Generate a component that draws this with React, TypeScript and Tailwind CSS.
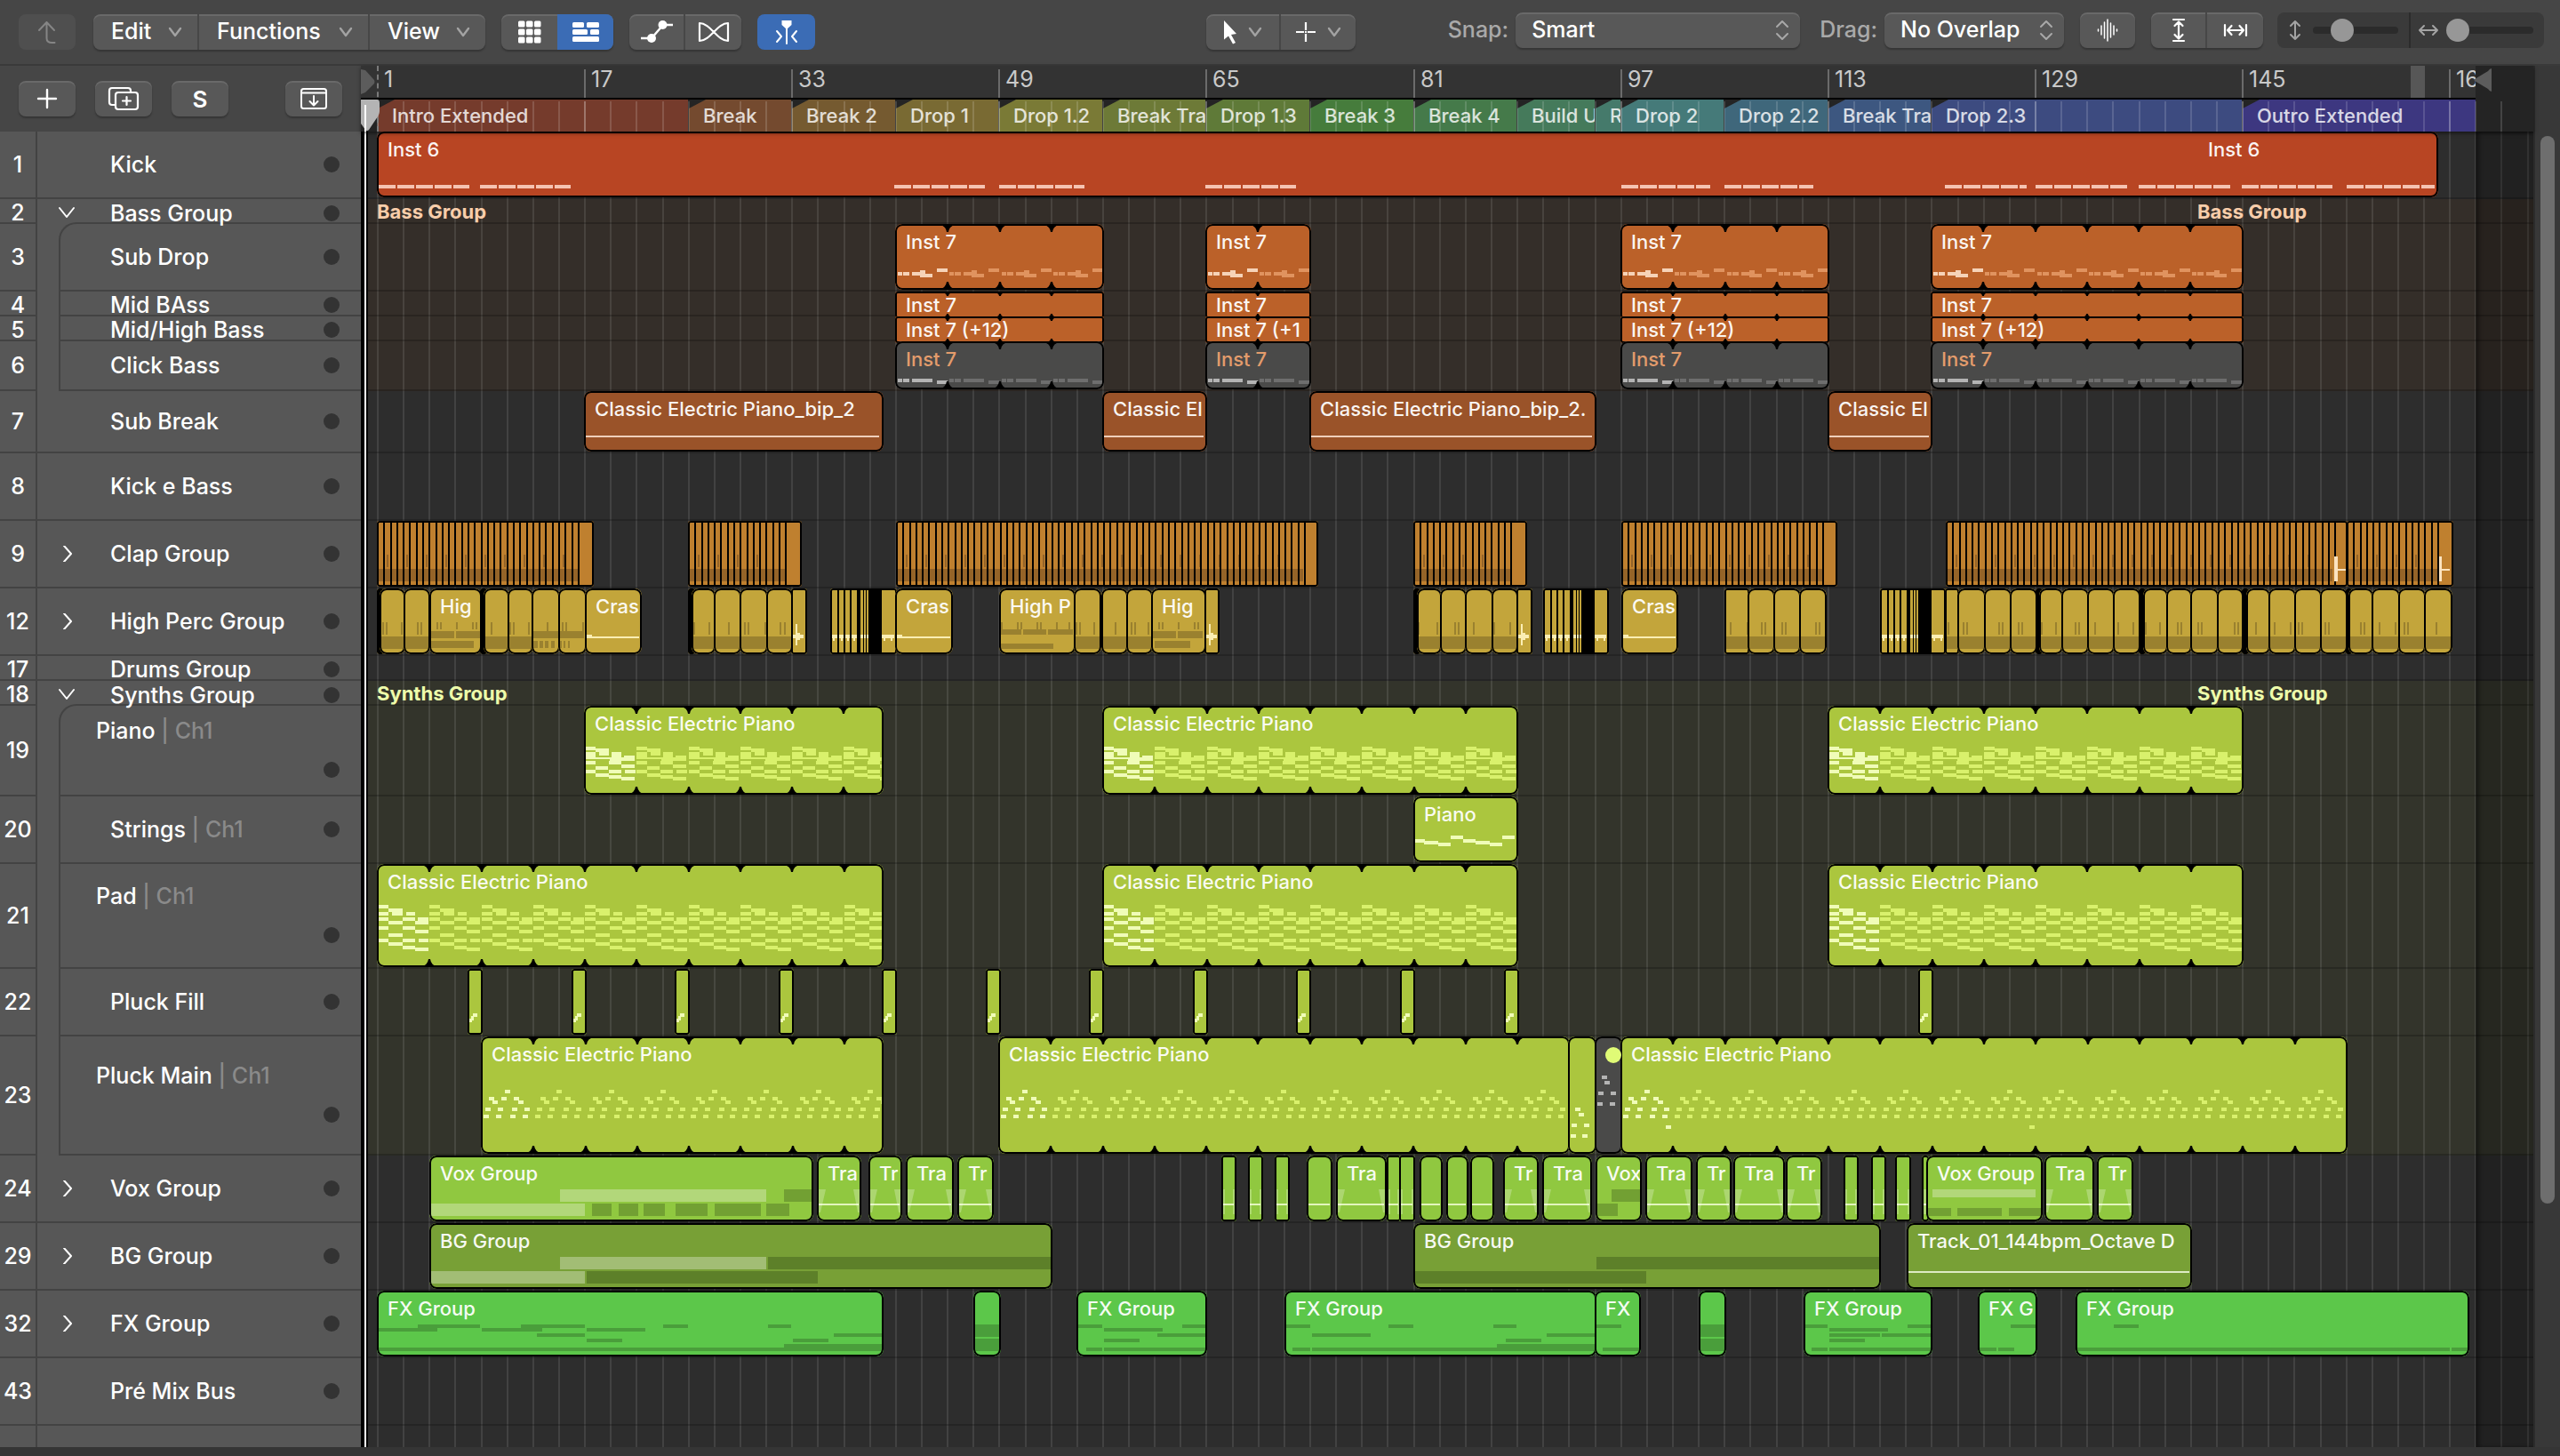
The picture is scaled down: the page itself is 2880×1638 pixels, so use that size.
import React, { useState } from 'react';

// ---------------------------------------------------------------------------
// Timeline geometry
// ---------------------------------------------------------------------------

const HEADER_W = 406;
const BAR_ONE = 424;
const BAR_W = 14.57;
const SONG_END = 2785;
const LABEL_TILE = 2048;

// neighbouring regions share their outline
const OVERLAP = 2;

const barX = (bar: number) => Math.round(BAR_ONE + (bar - 1) * BAR_W);
const barEnd = (bar: number) => barX(bar) + OVERLAP;
const toLane = (x: number) => x - HEADER_W;

type Block = [x: number, y: number, w: number, h: number, tone?: 'light' | 'dark' | 'dim'];

interface RegionData {
  x: number;
  end: number;
  label?: string;
  loop?: boolean;
  muted?: boolean;
  square?: boolean;
  wave?: boolean;
  slices?: boolean;
  burst?: boolean;
  hits?: number[];
  pattern?: Block[];
  blocks?: Block[];
}

interface Track {
  num: string;
  name: string;
  channel?: string;
  height: string;
  tall?: boolean;
  chevron?: 'open' | 'closed';
  tint?: string;
  banner?: string;
  color: string;
  compact?: boolean;
  light: string;
  dim: string;
  dark: string;
  regions: RegionData[];
}

// ---------------------------------------------------------------------------
// Note patterns, one loop (4 bars) each
// ---------------------------------------------------------------------------

const BASS: Block[] = [
  [2, 54, 5, 4], [8, 54, 7, 4], [18, 54, 10, 4], [27, 52, 6, 8], [32, 56, 9, 4], [46, 50, 12, 4],
];

const CLICK: Block[] = [
  [2, 42, 5, 4], [8, 42, 7, 4], [18, 42, 23, 4], [46, 44, 12, 4],
];

const PIANO: Block[] = [
  [0, 46, 12, 4], [12, 48, 14, 4], [16, 48, 11, 8], [0, 52, 12, 8], [30, 52, 11, 8],
  [12, 58, 16, 2], [28, 58, 18, 4], [44, 56, 12, 6], [0, 62, 12, 4], [27, 62, 14, 4], [41, 66, 15, 4],
  [12, 68, 14, 4], [0, 72, 12, 4], [27, 72, 14, 4], [45, 72, 12, 4], [12, 76, 15, 4],
  [27, 78, 14, 4], [41, 80, 15, 4],
];

const PAD: Block[] = [
  [0, 46, 12, 4], [12, 50, 16, 4], [16, 50, 12, 8], [0, 54, 12, 4], [32, 54, 10, 4], [0, 60, 12, 4],
  [28, 60, 14, 4], [45, 60, 12, 8], [12, 64, 16, 4], [42, 64, 14, 4], [0, 70, 12, 4],
  [28, 70, 14, 4], [42, 74, 15, 4], [12, 78, 16, 4], [0, 84, 12, 4], [28, 84, 14, 4],
  [46, 84, 11, 4], [12, 88, 16, 4], [28, 92, 14, 4], [42, 94, 15, 4],
];

const PLUCK: Block[] = [
  [26, 60, 6, 4], [8, 68, 6, 4], [22, 68, 6, 4], [36, 68, 6, 4], [12, 72, 6, 4], [41, 72, 6, 4],
  [4, 80, 6, 4], [18, 80, 6, 4], [34, 80, 6, 4], [48, 80, 6, 4],
  [2, 88, 6, 4], [16, 88, 6, 4], [32, 88, 6, 4], [46, 88, 6, 4],
];

const STRINGS: Block[] = [
  [1, 48, 12, 4], [12, 50, 16, 4], [28, 52, 14, 4], [42, 44, 14, 4],
  [56, 48, 14, 4], [70, 50, 16, 4], [86, 52, 14, 4], [100, 44, 14, 4],
];

const FILL: Block[] = [[2, 56, 3, 4], [4, 53, 3, 5], [6, 50, 5, 4]];

const kickRuns: [number, number][] = [
  [426, 528], [540, 642], [1006, 1108], [1124, 1220], [1356, 1458], [1824, 1924],
  [1940, 2040], [2188, 2280], [2290, 2394], [2406, 2510], [2522, 2624], [2640, 2739],
];

const kickNotes: Block[] = kickRuns.flatMap(([from, to]) => {
  const out: Block[] = [];
  for (let x = from; x < to; x += 21) {
    out.push([x - BAR_ONE, 60, Math.min(19, to - x), 4]);
  }
  return out;
});

const perc = (x: number, end: number, hits: number[] = [], square = false): RegionData => ({
  x,
  end: end + OVERLAP,
  square,
  hits,
  blocks: [[0, 54, end - x, 14, 'dark']],
});

const tra = (x: number, end: number, label?: string): RegionData => ({
  x,
  end,
  label,
  wave: true,
  square: end - x < 20,
});

const slices = (x: number, end: number): RegionData => ({ x, end, slices: true, square: true });

const loops = (from: number, to: number, label: string, pattern?: Block[], muted = false): RegionData => ({
  x: barX(from),
  end: barEnd(to),
  label,
  loop: true,
  pattern,
  muted,
});

const crash = (x: number, end: number): RegionData => ({
  x,
  end,
  label: 'Cras',
  blocks: [[1, 52, 7, 4, 'light'], [8, 54, end - x - 11, 2, 'light']],
});

const hit = (x: number, end: number): RegionData => ({
  x,
  end,
  square: true,
  blocks: [[1, 52, 13, 4, 'light'], [5, 40, 2, 24, 'light'], [7, 50, 3, 8, 'light']],
});

const ORANGE = { color: 'bg-[#bb6129]', light: '#f6d3b8', dim: '#e0935f', dark: '#8f4a1f' };
const BROWN = { color: 'bg-[#9a5329]', light: '#f0cfba', dim: '#e0935f', dark: '#7a4020' };
const LIME = { color: 'bg-[#abc63e]', light: '#f0fcb8', dim: '#d9f16c', dark: '#7f9a2c' };
const GREY_TRACK = { color: 'bg-[#575757]', light: '#fff', dim: '#ccc', dark: '#333' };

const PIANO_NAME = 'Classic Electric Piano';

const tracks: Track[] = [
  {
    num: '1',
    name: 'Kick',
    height: 'h-[76px]',
    color: 'bg-[#b84523]',
    light: '#f5c3b2',
    dim: '#f5c3b2',
    dark: '#8c3218',
    regions: [{ x: barX(1), end: barEnd(160), label: 'Inst 6', blocks: kickNotes }],
  },
  {
    num: '2',
    name: 'Bass Group',
    height: 'h-[28px]',
    chevron: 'open',
    tint: 'bg-[#342e29]',
    banner: 'text-[#f8cdaa]',
    ...GREY_TRACK,
    regions: [],
  },
  {
    num: '3',
    name: 'Sub Drop',
    height: 'h-[76px]',
    tint: 'bg-[#342e29]',
    ...ORANGE,
    regions: [
      loops(41, 57, 'Inst 7', BASS),
      loops(65, 73, 'Inst 7', BASS),
      loops(97, 113, 'Inst 7', BASS),
      loops(121, 145, 'Inst 7', BASS),
    ],
  },
  {
    num: '4',
    name: 'Mid BAss',
    height: 'h-[28px]',
    compact: true,
    tint: 'bg-[#342e29]',
    ...ORANGE,
    regions: [
      loops(41, 57, 'Inst 7'),
      loops(65, 73, 'Inst 7'),
      loops(97, 113, 'Inst 7'),
      loops(121, 145, 'Inst 7'),
    ],
  },
  {
    num: '5',
    name: 'Mid/High Bass',
    height: 'h-[28px]',
    compact: true,
    tint: 'bg-[#342e29]',
    ...ORANGE,
    regions: [
      loops(41, 57, 'Inst 7 (+12)'),
      loops(65, 73, 'Inst 7 (+1'),
      loops(97, 113, 'Inst 7 (+12)'),
      loops(121, 145, 'Inst 7 (+12)'),
    ],
  },
  {
    num: '6',
    name: 'Click Bass',
    height: 'h-[56px]',
    tint: 'bg-[#342e29]',
    ...ORANGE,
    regions: [
      loops(41, 57, 'Inst 7', CLICK, true),
      loops(65, 73, 'Inst 7', CLICK, true),
      loops(97, 113, 'Inst 7', CLICK, true),
      loops(121, 145, 'Inst 7', CLICK, true),
    ],
  },
  {
    num: '7',
    name: 'Sub Break',
    height: 'h-[70px]',
    ...BROWN,
    regions: [
      { x: barX(17), end: barEnd(40), label: 'Classic Electric Piano_bip_2', blocks: [[1, 50, 331, 2]] },
      { x: barX(57), end: barEnd(65), label: 'Classic El', blocks: [[1, 50, 113, 2]] },
      { x: barX(73), end: barEnd(95), label: 'Classic Electric Piano_bip_2.', blocks: [[1, 50, 317, 2]] },
      { x: barX(113), end: barEnd(121), label: 'Classic El', blocks: [[1, 50, 113, 2]] },
    ],
  },
  { num: '8', name: 'Kick e Bass', height: 'h-[76px]', ...BROWN, regions: [] },
  {
    num: '9',
    name: 'Clap Group',
    height: 'h-[76px]',
    chevron: 'closed',
    color: 'bg-[#bf802f]',
    light: '#fbe3c0',
    dim: '#fbe3c0',
    dark: '#956428',
    regions: [
      slices(424, 668),
      slices(774, 902),
      slices(1008, 1483),
      slices(1590, 1718),
      slices(1824, 2067),
      {
        ...slices(2189, 2641),
        blocks: [[437, 40, 4, 28, 'light'], [441, 54, 9, 2, 'light']],
      },
      {
        ...slices(2640, 2760),
        blocks: [[104, 40, 3, 28, 'light'], [107, 54, 9, 2, 'light']],
      },
    ],
  },
  {
    num: '12',
    name: 'High Perc Group',
    height: 'h-[76px]',
    chevron: 'closed',
    color: 'bg-[#c3a53b]',
    light: '#fbeeb4',
    dim: '#fbeeb4',
    dark: '#9a812f',
    regions: [
      { x: 424, end: 432, burst: true },
      perc(427, 454, [3, 7, 24]),
      perc(454, 482, [15, 19]),
      {
        x: 483,
        end: 542,
        label: 'Hig',
        hits: [8, 12, 30, 48, 52],
        blocks: [[0, 48, 28, 8, 'dark'], [30, 48, 28, 8, 'dark'], [0, 59, 50, 8, 'dark']],
      },
      { x: 540, end: 548, burst: true },
      perc(544, 571, [8]),
      perc(571, 598, [2, 6, 23]),
      {
        x: 598,
        end: 630,
        hits: [17],
        blocks: [[0, 48, 30, 8, 'dark'], [1, 59, 6, 8, 'dark'], [9, 59, 4, 8, 'dark'], [15, 59, 4, 8, 'dark'], [22, 59, 4, 8, 'dark']],
      },
      {
        x: 628,
        end: 660,
        hits: [4, 8, 27],
        blocks: [[0, 48, 29, 8, 'dark'], [1, 59, 3, 8, 'dark'], [6, 59, 2, 8, 'dark'], [11, 59, 2, 8, 'dark']],
      },
      crash(658, 722),
      { x: 774, end: 782, burst: true },
      perc(778, 803, [2, 19]),
      perc(803, 832, [16]),
      perc(832, 862, [5, 9, 28]),
      perc(862, 890, [15, 20]),
      hit(890, 908),
      { x: 934, end: 1009, burst: true, square: true },
      crash(1007, 1072),
      {
        x: 1124,
        end: 1210,
        label: 'High P',
        hits: [2, 20, 24, 42, 46, 64, 78],
        blocks: [[0, 46, 25, 6, 'dark'], [27, 46, 26, 6, 'dark'], [55, 46, 28, 6, 'dark'], [0, 62, 61, 6, 'dark']],
      },
      perc(1208, 1237, [2, 6, 22]),
      perc(1239, 1267, [15]),
      perc(1267, 1295, [5, 9, 24]),
      {
        x: 1295,
        end: 1357,
        label: 'Hig',
        hits: [8, 12, 30, 48, 52],
        blocks: [[0, 48, 28, 8, 'dark'], [30, 48, 28, 8, 'dark'], [4, 59, 40, 8, 'dark']],
      },
      hit(1355, 1372),
      { x: 1590, end: 1598, burst: true },
      perc(1594, 1620, [1, 22, 26]),
      perc(1620, 1648, [16, 20]),
      perc(1648, 1678, [9]),
      perc(1678, 1706, [2, 20]),
      hit(1706, 1724),
      { x: 1736, end: 1810, burst: true, square: true },
      crash(1824, 1888),
      perc(1940, 1966, [6, 25], true),
      perc(1966, 1995, [15, 19]),
      perc(1995, 2024, [9, 13]),
      perc(2024, 2053, [18, 22]),
      { x: 2115, end: 2189, burst: true, square: true },
      perc(2188, 2202, [3], true),
      perc(2202, 2232, [6, 10]),
      perc(2232, 2261, [16, 20]),
      perc(2261, 2290, [9, 13]),
      { x: 2290, end: 2298, burst: true },
      perc(2294, 2319, [2, 18]),
      perc(2319, 2348, [15, 19]),
      perc(2348, 2377, [8]),
      perc(2377, 2406, [5, 22]),
      { x: 2406, end: 2414, burst: true },
      perc(2411, 2437, [2, 18]),
      perc(2437, 2464, [12, 16]),
      perc(2464, 2494, [8, 12]),
      perc(2494, 2522, [19, 23]),
      { x: 2522, end: 2530, burst: true },
      perc(2527, 2552, [10]),
      perc(2552, 2581, [6, 24]),
      perc(2581, 2610, [4, 8]),
      perc(2610, 2639, [5, 9]),
      { x: 2639, end: 2646, burst: true },
      perc(2642, 2668, [13, 17]),
      perc(2668, 2698, [8, 26]),
      perc(2698, 2727, [6, 10]),
      perc(2727, 2757, [13]),
    ],
  },
  { num: '17', name: 'Drums Group', height: 'h-[28px]', ...GREY_TRACK, regions: [] },
  {
    num: '18',
    name: 'Synths Group',
    height: 'h-[28px]',
    chevron: 'open',
    tint: 'bg-[#33342b]',
    banner: 'text-[#eefcaa]',
    ...GREY_TRACK,
    regions: [],
  },
  {
    num: '19',
    name: 'Piano',
    channel: 'Ch1',
    height: 'h-[102px]',
    tall: true,
    tint: 'bg-[#33342b]',
    ...LIME,
    regions: [
      loops(17, 40, PIANO_NAME, PIANO),
      loops(57, 89, PIANO_NAME, PIANO),
      loops(113, 145, PIANO_NAME, PIANO),
    ],
  },
  {
    num: '20',
    name: 'Strings',
    channel: 'Ch1',
    height: 'h-[76px]',
    tint: 'bg-[#33342b]',
    ...LIME,
    regions: [{ x: barX(81), end: barEnd(89), label: 'Piano', blocks: STRINGS }],
  },
  {
    num: '21',
    name: 'Pad',
    channel: 'Ch1',
    height: 'h-[118px]',
    tall: true,
    tint: 'bg-[#33342b]',
    ...LIME,
    regions: [
      loops(1, 40, PIANO_NAME, PAD),
      loops(57, 89, PIANO_NAME, PAD),
      loops(113, 145, PIANO_NAME, PAD),
    ],
  },
  {
    num: '22',
    name: 'Pluck Fill',
    height: 'h-[76px]',
    tint: 'bg-[#33342b]',
    ...LIME,
    regions: [8, 16, 24, 32, 40, 48, 56, 64, 72, 80, 88, 120].map((bar) => ({
      x: barX(bar),
      end: barX(bar) + 17,
      square: true,
      blocks: FILL,
    })),
  },
  {
    num: '23',
    name: 'Pluck Main',
    channel: 'Ch1',
    height: 'h-[134px]',
    tall: true,
    tint: 'bg-[#33342b]',
    ...LIME,
    regions: [
      loops(9, 40, PIANO_NAME, PLUCK),
      loops(49, 93, PIANO_NAME, PLUCK),
      {
        x: barX(93),
        end: barEnd(95),
        blocks: [[8, 80, 6, 4], [12, 86, 6, 4], [4, 98, 6, 4], [18, 98, 6, 4], [3, 110, 6, 4], [16, 110, 6, 4]],
      },
      {
        x: barX(95),
        end: barEnd(97),
        muted: true,
        blocks: [[8, 44, 6, 4], [11, 50, 6, 4], [4, 62, 6, 4], [18, 62, 6, 4], [3, 74, 6, 4], [17, 74, 6, 4]],
      },
      {
        ...loops(97, 153, PIANO_NAME, PLUCK),
        blocks: [[51, 100, 6, 4], [460, 100, 6, 4, 'dim']],
      },
    ],
  },
  {
    num: '24',
    name: 'Vox Group',
    height: 'h-[76px]',
    chevron: 'closed',
    color: 'bg-[#90c840]',
    light: '#b2d77a',
    dim: '#e2f5bd',
    dark: '#72a033',
    regions: [
      {
        x: 483,
        end: 915,
        label: 'Vox Group',
        blocks: [
          [147, 38, 232, 14], [399, 38, 33, 14, 'dark'], [0, 54, 175, 14], [183, 54, 22, 14, 'dark'],
          [213, 54, 22, 14, 'dark'], [241, 54, 24, 14, 'dark'], [277, 54, 36, 14, 'dark'],
          [321, 54, 52, 14, 'dark'], [379, 54, 26, 14, 'dark'],
        ],
      },
      tra(919, 969, 'Tra'),
      tra(977, 1015, 'Tr'),
      tra(1019, 1073, 'Tra'),
      tra(1077, 1118, 'Tr'),
      tra(1374, 1391),
      tra(1404, 1421),
      tra(1434, 1451),
      tra(1470, 1499),
      tra(1503, 1560, 'Tra'),
      tra(1560, 1576),
      tra(1574, 1592),
      tra(1597, 1623),
      tra(1627, 1652),
      tra(1654, 1681),
      tra(1691, 1731, 'Tr'),
      tra(1735, 1791, 'Tra'),
      {
        x: 1795,
        end: 1847,
        label: 'Vox',
        blocks: [[18, 38, 34, 14, 'dark'], [0, 54, 25, 14, 'dark']],
      },
      tra(1851, 1904, 'Tra'),
      tra(1908, 1948, 'Tr'),
      tra(1950, 2008, 'Tra'),
      tra(2009, 2050, 'Tr'),
      tra(2074, 2091),
      tra(2105, 2122),
      tra(2132, 2150),
      tra(2162, 2170),
      {
        x: 2167,
        end: 2298,
        label: 'Vox Group',
        blocks: [
          [7, 38, 116, 9], [0, 59, 28, 9, 'dark'], [35, 59, 50, 9, 'dark'], [93, 59, 38, 9, 'dark'],
        ],
      },
      tra(2300, 2356, 'Tra'),
      tra(2359, 2400, 'Tr'),
    ],
  },
  {
    num: '29',
    name: 'BG Group',
    height: 'h-[76px]',
    chevron: 'closed',
    color: 'bg-[#78a036]',
    light: '#a2bd75',
    dim: '#deebc4',
    dark: '#5d8029',
    regions: [
      {
        x: 483,
        end: 1184,
        label: 'BG Group',
        blocks: [
          [147, 38, 232, 14], [381, 38, 320, 14, 'dark'], [0, 54, 175, 14], [177, 54, 260, 14, 'dark'],
        ],
      },
      {
        x: 1590,
        end: 2116,
        label: 'BG Group',
        blocks: [[206, 38, 320, 14, 'dark'], [0, 54, 262, 14, 'dark']],
      },
      { x: 2145, end: 2466, label: 'Track_01_144bpm_Octave D', blocks: [[1, 54, 317, 2, 'dim']] },
    ],
  },
  {
    num: '32',
    name: 'FX Group',
    height: 'h-[76px]',
    chevron: 'closed',
    color: 'bg-[#5cc74a]',
    light: '#4a9e3b',
    dim: '#4a9e3b',
    dark: '#4a9e3b',
    regions: [
      {
        x: 424,
        end: 994,
        label: 'FX Group',
        blocks: [
          [46, 38, 70, 4], [162, 38, 72, 4], [322, 38, 28, 4], [440, 38, 26, 4], [0, 42, 68, 4],
          [118, 42, 68, 4], [236, 42, 66, 4], [180, 48, 54, 4], [514, 48, 56, 4], [236, 54, 40, 4],
          [468, 54, 40, 4], [458, 60, 112, 4], [0, 64, 570, 4],
        ],
      },
      { x: 1095, end: 1126, blocks: [[0, 38, 31, 14], [0, 54, 31, 14]] },
      {
        x: 1211,
        end: 1358,
        label: 'FX Group',
        blocks: [
          [0, 38, 29, 4], [119, 38, 28, 4], [31, 42, 66, 4], [91, 48, 56, 4], [31, 54, 40, 4],
          [11, 64, 18, 4], [31, 64, 116, 4],
        ],
      },
      {
        x: 1445,
        end: 1796,
        label: 'FX Group',
        blocks: [
          [0, 38, 29, 4], [117, 38, 28, 4], [235, 38, 26, 4], [31, 48, 66, 4], [295, 48, 56, 4],
          [249, 54, 40, 4], [239, 60, 112, 4], [9, 64, 20, 4], [31, 64, 320, 4],
        ],
      },
      { x: 1794, end: 1846, label: 'FX', blocks: [[0, 38, 30, 4], [9, 64, 41, 4]] },
      { x: 1911, end: 1942, blocks: [[0, 38, 31, 14], [0, 54, 31, 14]] },
      {
        x: 2029,
        end: 2174,
        label: 'FX Group',
        blocks: [
          [0, 38, 27, 4], [117, 38, 28, 4], [29, 42, 66, 4], [29, 48, 57, 4], [88, 48, 57, 4],
          [29, 54, 40, 4], [9, 64, 18, 4], [29, 64, 116, 4],
        ],
      },
      { x: 2225, end: 2292, label: 'FX G', blocks: [[37, 38, 30, 4], [0, 64, 21, 4], [23, 64, 18, 4]] },
      { x: 2335, end: 2778, label: 'FX Group', blocks: [[43, 38, 28, 4], [0, 64, 421, 4], [423, 64, 20, 4]] },
    ],
  },
  { num: '43', name: 'Pré Mix Bus', height: 'h-[76px]', ...GREY_TRACK, regions: [] },
];

const markers: { bar: number; name: string; color: string }[] = [
  { bar: 1, name: 'Intro Extended', color: 'bg-[#753b2c]' },
  { bar: 25, name: 'Break', color: 'bg-[#744a2f]' },
  { bar: 33, name: 'Break 2', color: 'bg-[#755a30]' },
  { bar: 41, name: 'Drop 1', color: 'bg-[#796a33]' },
  { bar: 49, name: 'Drop 1.2', color: 'bg-[#7a7a36]' },
  { bar: 57, name: 'Break Tra', color: 'bg-[#6d7a37]' },
  { bar: 65, name: 'Drop 1.3', color: 'bg-[#5f7a38]' },
  { bar: 73, name: 'Break 3', color: 'bg-[#467c3c]' },
  { bar: 81, name: 'Break 4', color: 'bg-[#457a4a]' },
  { bar: 89, name: 'Build U', color: 'bg-[#457a5b]' },
  { bar: 95, name: 'R', color: 'bg-[#457a6b]' },
  { bar: 97, name: 'Drop 2', color: 'bg-[#457a79]' },
  { bar: 105, name: 'Drop 2.2', color: 'bg-[#3f677b]' },
  { bar: 113, name: 'Break Tra', color: 'bg-[#3d5780]' },
  { bar: 121, name: 'Drop 2.3', color: 'bg-[#3d4b80]' },
  { bar: 145, name: 'Outro Extended', color: 'bg-[#3d3780]' },
];

// ---------------------------------------------------------------------------
// Small controls
// ---------------------------------------------------------------------------

const RAISED =
  'bg-[#585858] shadow-[inset_0_2px_0_rgba(255,255,255,0.1),0_2px_2px_rgba(0,0,0,0.25)]';

const Caret: React.FC = () => (
  <svg className="h-3 w-4 text-[#a3a3a3]" viewBox="0 0 16 12" fill="none" stroke="currentColor" strokeWidth={2.4} strokeLinecap="round" strokeLinejoin="round">
    <path d="M2 2l6 8 6-8" />
  </svg>
);

const MenuButton: React.FC<{ label: string; width: string }> = ({ label, width }) => (
  <button type="button" className={`flex items-center justify-between pl-5 pr-[17px] text-white ${width}`}>
    {label}
    <Caret />
  </button>
);

const StepperArrows: React.FC = () => (
  <svg className="pointer-events-none absolute right-3 top-2 h-6 w-4 text-[#a8a8a8]" viewBox="0 0 16 24" fill="none" stroke="currentColor" strokeWidth={2} strokeLinecap="round" strokeLinejoin="round">
    <path d="M2 8l6-6 6 6M2 16l6 6 6-6" />
  </svg>
);

const PickList: React.FC<{ id: string; label: string; options: string[]; width: string }> = ({ id, label, options, width }) => (
  <div className="flex items-center gap-2">
    <label htmlFor={id} className="text-[#a9a9a9]">
      {label}
    </label>
    <div className={`relative rounded-lg ${RAISED} ${width}`}>
      <select id={id} className="h-10 w-full appearance-none bg-transparent pl-[18px] text-white outline-none">
        {options.map((option) => (
          <option key={option}>{option}</option>
        ))}
      </select>
      <StepperArrows />
    </div>
  </div>
);

const ZoomSlider: React.FC<{ label: string; start: number; icon: React.ReactNode }> = ({ label, start, icon }) => {
  const [value, setValue] = useState(start);
  return (
    <div className="flex h-full w-[150px] items-center gap-2 pl-2 pr-3">
      <span className="flex w-6 shrink-0 justify-center">{icon}</span>
      <input
        type="range"
        aria-label={label}
        min={0}
        max={100}
        value={value}
        onChange={(e) => setValue(Number(e.target.value))}
        className="h-2 min-w-0 flex-1 appearance-none rounded-full bg-[#2b2b2b] outline-none [&::-webkit-slider-thumb]:size-[26px] [&::-webkit-slider-thumb]:appearance-none [&::-webkit-slider-thumb]:rounded-full [&::-webkit-slider-thumb]:bg-[#979797]"
      />
    </div>
  );
};

const Toolbar: React.FC = () => (
  <header className="relative flex h-[74px] shrink-0 items-center justify-between overflow-hidden border-b-2 border-[#3a3a3a] bg-[#464646] text-[25px] font-medium">
    <div className="flex items-center pl-[21px]">
      <button type="button" aria-label="Back" className="flex h-10 w-16 items-center justify-center rounded-lg bg-[#4f4f4f] text-[#858585]">
        <svg className="h-7 w-6" viewBox="0 0 24 28" fill="none" stroke="currentColor" strokeWidth={2} strokeLinecap="round" strokeLinejoin="round">
          <path d="M3 12l8.500-9L20 12M11.500 3v18q0 5 6 5h3" />
        </svg>
      </button>
      <div className={`ml-5 flex h-10 divide-x-2 divide-[#474747] rounded-lg ${RAISED}`}>
        <MenuButton label="Edit" width="w-[119px]" />
        <MenuButton label="Functions" width="w-[192px]" />
        <MenuButton label="View" width="w-[130px]" />
      </div>
      <div className={`ml-[18px] flex h-10 overflow-hidden rounded-lg ${RAISED}`}>
        <button type="button" aria-label="Live loops grid" className="flex w-[63px] items-center justify-center text-white">
          <svg className="size-[26px]" viewBox="0 0 26 26" fill="currentColor">
            {[0, 9, 18].map((y) => [0, 9, 18].map((x) => <rect key={`${x}-${y}`} x={x} y={y + 0.5} width={7.5} height={7} rx={1.5} />))}
          </svg>
        </button>
        <button type="button" aria-label="Tracks view" className="flex w-[63px] items-center justify-center bg-[#3b6cb5] text-white">
          <svg className="h-6 w-[30px]" viewBox="0 0 30 24" fill="currentColor">
            <rect x={0} y={1} width={13} height={6} rx={1.5} />
            <rect x={16} y={1} width={14} height={6} rx={1.5} />
            <rect x={0} y={9} width={17} height={6} rx={1.5} />
            <rect x={20} y={9} width={10} height={6} rx={1.5} />
            <rect x={0} y={17} width={30} height={6} rx={1.5} />
          </svg>
        </button>
      </div>
      <div className={`ml-[18px] flex h-10 divide-x-2 divide-[#474747] rounded-lg ${RAISED}`}>
        <button type="button" aria-label="Automation" className="flex w-[63px] items-center justify-center text-white">
          <svg className="h-7 w-9" viewBox="0 0 36 28" fill="none" stroke="currentColor" strokeWidth={2.4}>
            <path d="M0 21h12L25 6h11" />
            <circle cx={12} cy={21} r={5} fill="currentColor" stroke="none" />
            <circle cx={24.5} cy={6} r={5} fill="currentColor" stroke="none" />
          </svg>
        </button>
        <button type="button" aria-label="Flex" className="flex w-[63px] items-center justify-center text-white">
          <svg className="h-6 w-9" viewBox="0 0 36 24" fill="none" stroke="currentColor" strokeWidth={2.2} strokeLinejoin="round">
            <path d="M2 2v20C14 22 22 2 34 2v20C22 22 14 2 2 2z" />
          </svg>
        </button>
      </div>
      <button type="button" aria-label="Catch playhead" className="ml-[18px] flex h-10 w-[65px] items-center justify-center rounded-lg bg-[#3b6cb5] text-white">
        <svg className="h-7 w-7" viewBox="0 0 28 28" fill="none" stroke="currentColor" strokeWidth={2} strokeLinecap="round" strokeLinejoin="round">
          <path d="M8.500 1h11v5L14 11 8.500 6z" fill="currentColor" stroke="none" />
          <path d="M14 8v19M3 13l5 6-5 6M25 13l-5 6 5 6" />
        </svg>
      </button>
    </div>

    <div className="flex items-center pb-1 pr-[18px]">
      <div className={`mt-1 flex h-10 divide-x-2 divide-[#474747] rounded-lg ${RAISED}`}>
        <button type="button" aria-label="Left click tool" className="flex w-[84px] items-center justify-center gap-3 text-white">
          <svg className="h-7 w-4" viewBox="0 0 16 28" fill="currentColor">
            <path d="M1 1l14 15-6 1 5 9-3 1.500-5-9-5 4z" />
          </svg>
          <Caret />
        </button>
        <button type="button" aria-label="Command click tool" className="flex w-[84px] items-center justify-center gap-3 text-white">
          <svg className="h-6 w-6" viewBox="0 0 24 24" fill="none" stroke="currentColor" strokeWidth={2.2}>
            <path d="M12 1v9M12 14v9M1 12h9M14 12h9M11 12h2" />
          </svg>
          <Caret />
        </button>
      </div>
      <div className="ml-[104px]">
        <PickList id="snap" label="Snap:" options={['Smart', 'Bar', 'Beat', 'Division', 'Ticks']} width="w-[320px]" />
      </div>
      <div className="ml-[22px]">
        <PickList id="drag" label="Drag:" options={['No Overlap', 'Overlap', 'X-Fade', 'Shuffle L', 'Shuffle R']} width="w-[202px]" />
      </div>
      <button type="button" aria-label="Waveform zoom" className={`ml-[18px] flex h-10 w-[62px] items-center justify-center rounded-lg text-white ${RAISED}`}>
        <svg className="h-7 w-6" viewBox="0 0 24 28" stroke="currentColor" strokeWidth={1.5} strokeLinecap="round">
          <path d="M1.500 13v2M5 9v10M8.500 5v18M12 2v24M15.500 6v16M19 9v10M22.500 13v2" />
        </svg>
      </button>
      <div className={`ml-[18px] flex h-10 divide-x-2 divide-[#474747] rounded-lg ${RAISED}`}>
        <button type="button" aria-label="Vertical auto zoom" className="flex w-[63px] items-center justify-center text-white">
          <svg className="h-7 w-5" viewBox="0 0 20 28" fill="none" stroke="currentColor" strokeWidth={2.2} strokeLinecap="round" strokeLinejoin="round">
            <path d="M4 2h12M4 26h12M10 5v18M5.500 9L10 4.500 14.500 9M5.500 19l4.500 4.500 4.500-4.500" />
          </svg>
        </button>
        <button type="button" aria-label="Horizontal auto zoom" className="flex w-[63px] items-center justify-center text-white">
          <svg className="h-5 w-7" viewBox="0 0 28 20" fill="none" stroke="currentColor" strokeWidth={2.2} strokeLinecap="round" strokeLinejoin="round">
            <path d="M2 4v12M26 4v12M5 10h18M9.500 5L5 10l4.500 5M18.500 5l4.500 5-4.500 5" />
          </svg>
        </button>
      </div>
      <div className="ml-4 flex h-10 items-center divide-x-2 divide-[#2c2c2c] rounded-lg bg-[#3a3a3a] text-[#a3a3a3]">
        <ZoomSlider
          label="Vertical zoom"
          start={28}
          icon={
            <svg className="h-6 w-4" viewBox="0 0 16 24" fill="none" stroke="currentColor" strokeWidth={2} strokeLinecap="round" strokeLinejoin="round">
              <path d="M8 2v20M3 7l5-5 5 5M3 17l5 5 5-5" />
            </svg>
          }
        />
        <ZoomSlider
          label="Horizontal zoom"
          start={0}
          icon={
            <svg className="h-4 w-6" viewBox="0 0 24 16" fill="none" stroke="currentColor" strokeWidth={2} strokeLinecap="round" strokeLinejoin="round">
              <path d="M2 8h20M7 3L2 8l5 5M17 3l5 5-5 5" />
            </svg>
          }
        />
      </div>
    </div>
  </header>
);

// ---------------------------------------------------------------------------
// Track headers
// ---------------------------------------------------------------------------

const HeaderButtons: React.FC = () => (
  <div className="flex h-[74px] shrink-0 items-center bg-[#464646] pl-[21px] pr-[21px] text-white">
    <button type="button" aria-label="Add track" className={`flex h-10 w-16 items-center justify-center rounded-lg ${RAISED}`}>
      <svg className="size-6" viewBox="0 0 24 24" stroke="currentColor" strokeWidth={2.4} strokeLinecap="round">
        <path d="M12 2v20M2 12h20" />
      </svg>
    </button>
    <button type="button" aria-label="Duplicate track" className={`ml-[22px] flex h-10 w-16 items-center justify-center rounded-lg ${RAISED}`}>
      <svg className="h-7 w-9" viewBox="0 0 36 28" fill="none" stroke="currentColor" strokeWidth={2.2} strokeLinecap="round" strokeLinejoin="round">
        <path d="M8 21H5q-3 0-3-3V5q0-3 3-3h18q3 0 3 3v1" />
        <rect x={9} y={7} width={25} height={19} rx={3} />
        <path d="M21.500 12v9M17 16.500h9" />
      </svg>
    </button>
    <button type="button" aria-label="Global solo" className={`ml-[22px] flex h-10 w-16 items-center justify-center rounded-lg text-[26px] font-semibold ${RAISED}`}>
      S
    </button>
    <button type="button" aria-label="Global tracks" className={`ml-auto flex h-10 w-16 items-center justify-center rounded-lg ${RAISED}`}>
      <svg className="h-6 w-8" viewBox="0 0 32 24" fill="none" stroke="currentColor" strokeWidth={2} strokeLinecap="round" strokeLinejoin="round">
        <rect x={2} y={1} width={28} height={22} rx={2.5} />
        <path d="M2 5.500h28M16 9v10M11.500 15l4.500 4.500 4.500-4.500" />
      </svg>
    </button>
  </div>
);

const Dot: React.FC = () => <span className="size-[18px] shrink-0 rounded-full bg-[#333333]" />;

const TrackName: React.FC<{ track: Track }> = ({ track }) => (
  <span className="whitespace-nowrap leading-[26px] text-white">
    {track.name}
    {track.channel && <span className="text-[#8a8a8a]"> | {track.channel}</span>}
  </span>
);

// the 28px rows carry their text slightly below the middle
const rowPad = (track: Track) => (track.height === 'h-[28px]' ? 'pt-[3px]' : '');

const TrackHeader: React.FC<{ track: Track; nested?: boolean }> = ({ track, nested }) => {
  const line = track.chevron === 'open' ? '' : 'border-b-2 border-[#434343]';
  if (track.tall) {
    return (
      <div className={`flex flex-col justify-center pl-10 pr-6 ${line} ${track.height}`}>
        <div className="flex h-11 items-center">
          <TrackName track={track} />
        </div>
        <div className="flex h-11 items-center justify-end">
          <Dot />
        </div>
      </div>
    );
  }
  return (
    <div className={`flex items-center pr-6 ${rowPad(track)} ${line} ${track.height}`}>
      <div className={`shrink-0 pl-[22px] ${nested ? 'w-[56px]' : 'w-[82px]'}`}>
        {track.chevron && (
          <button type="button" aria-label={`${track.name} stack`} className="flex size-[22px] items-center justify-center text-white">
            <svg className="size-[18px]" viewBox="0 0 18 18" fill="none" stroke="currentColor" strokeWidth={2} strokeLinecap="round" strokeLinejoin="round">
              <path d={track.chevron === 'open' ? 'M1 3l8 10 8-10' : 'M6 0l8 9-8 9'} />
            </svg>
          </button>
        )}
      </div>
      <div className="flex flex-1 items-center justify-between">
        <TrackName track={track} />
        <Dot />
      </div>
    </div>
  );
};

const between = (from: string, to: string) => {
  const nums = tracks.map((t) => t.num);
  return tracks.slice(nums.indexOf(from), nums.indexOf(to) + 1);
};

const NestedHeaders: React.FC<{ items: Track[] }> = ({ items }) => (
  <div className="-mt-0.5 ml-6 rounded-tl-[20px] border-l-2 border-t-2 border-[#434343]">
    {items.map((t) => (
      <TrackHeader key={t.num} track={t} nested />
    ))}
  </div>
);

const TrackHeaders: React.FC = () => (
  <div className="flex min-h-0 flex-1 overflow-hidden bg-[#575757] text-[25px] font-medium text-white">
    <div className="w-[42px] shrink-0 border-r-2 border-[#434343]">
      {tracks.map((t) => (
        <div key={t.num} className={`flex items-center justify-center border-b-2 border-[#434343] leading-[26px] ${rowPad(t)} ${t.height}`}>
          {t.num}
        </div>
      ))}
    </div>
    <div className="min-w-0 flex-1">
      {between('1', '2').map((t) => (
        <TrackHeader key={t.num} track={t} />
      ))}
      <NestedHeaders items={between('3', '6')} />
      {between('7', '18').map((t) => (
        <TrackHeader key={t.num} track={t} />
      ))}
      <NestedHeaders items={between('19', '23')} />
      {between('24', '43').map((t) => (
        <TrackHeader key={t.num} track={t} />
      ))}
    </div>
  </div>
);

// ---------------------------------------------------------------------------
// Ruler and markers
// ---------------------------------------------------------------------------

const Ruler: React.FC = () => {
  const numbers = Array.from({ length: 11 }, (_, i) => 1 + i * 16);
  const songW = SONG_END - HEADER_W;
  return (
    <div className="relative z-10 h-[74px] shrink-0 overflow-hidden bg-[#242424] shadow-[0_2px_4px_rgba(0,0,0,0.5)]">
      <div className="relative h-9 overflow-hidden bg-[#333333] text-[25px] text-[#c9c9c9]" style={{ width: songW }}>
        {numbers.map((n) => (
          <span
            key={n}
            className={`absolute top-1 h-8 leading-[22px] ${n === 1 ? 'pl-2' : 'border-l-2 border-[#6b6b6b] pl-1.5'}`}
            style={{ left: toLane(barX(n)) }}
          >
            {n}
          </span>
        ))}
        <div className="absolute top-0 h-9 w-4 bg-[#575757]" style={{ left: toLane(2712) }} />
      </div>
      <div className="relative h-[38px] overflow-hidden border-t-2 border-black text-[22px] font-medium" style={{ width: songW }}>
        {markers.map((m, i) => {
          const next = markers[i + 1];
          const left = barX(m.bar);
          const end = next ? barX(next.bar) : SONG_END;
          return (
            <div
              key={m.bar}
              className={`absolute inset-y-0 overflow-hidden whitespace-nowrap pl-[17px] leading-9 text-white/80 [clip-path:polygon(20px_0,100%_0,100%_100%,1px_100%,1px_10px)] ${m.color}`}
              style={{ left: toLane(left), width: end - left }}
            >
              {m.name}
            </div>
          );
        })}
      </div>
      {Array.from({ length: 83 }, (_, i) => 1 + i * 2).map((bar) => (
        <div
          key={bar}
          className={`absolute bottom-0 h-[34px] w-0.5 ${bar % 16 === 1 ? 'bg-white/30' : 'bg-white/15'}`}
          style={{ left: toLane(barX(bar)) }}
        />
      ))}
      <svg className="absolute left-0 top-1 h-7 w-4 text-[#5c5c5c]" viewBox="0 0 16 28" fill="currentColor">
        <path d="M0 0L5 1l10 11q1 2 0 4L5 26l-5 2z" />
      </svg>
      <svg className="absolute top-0.5 h-7 w-5 text-[#5c5c5c]" style={{ left: toLane(2783) }} viewBox="0 0 20 28" fill="currentColor">
        <path d="M20 1v26q-2 0-4-3L1 15q-1-1 0-2L16 4q2-3 4-3z" />
      </svg>
      <div className="absolute inset-y-0 border-l-2 border-dashed border-[#7a7a7a]" style={{ left: toLane(BAR_ONE) }} />
      <svg className="absolute left-0 top-[38px] h-9 w-[22px] text-[#b4b4b4]" viewBox="0 0 22 36" fill="currentColor">
        <path d="M0 0h18q3 0 3 4v9q0 4-4 9l-8 12q-2 2-4 0l-5-7z" />
        <path d="M4 6h2v30H4z" fill="#fff" />
      </svg>
    </div>
  );
};

// ---------------------------------------------------------------------------
// Regions
// ---------------------------------------------------------------------------

const LOOP_BARS = 4;

const RegionArt: React.FC<{ region: RegionData; track: Track }> = ({ region, track }) => {
  const w = region.end - region.x;
  const light = region.muted ? '#b4b4b4' : track.light;
  const dim = region.muted ? '#6e6e6e' : track.dim;
  const tone = (t?: string) => (t === 'dark' ? track.dark : t === 'dim' ? dim : light);

  const startBar = (region.x - BAR_ONE) / BAR_W;
  const repeats = region.loop ? Math.ceil(w / (BAR_W * LOOP_BARS) - 0.1) : 0;
  const loopX = (i: number) =>
    Math.round(BAR_ONE + (startBar + i * LOOP_BARS) * BAR_W) - region.x;

  return (
    <svg className="absolute inset-0 size-full" shapeRendering="crispEdges">
      {region.slices && (
        <>
          <rect x={0} y={54} width={w - 17} height={14} fill={track.dark} />
          {Array.from({ length: Math.floor((w - 20) / 22) }, (_, i) => (
            <rect key={i} x={11 + i * 22} y={38} width={2} height={14} fill={track.dark} />
          ))}
          {Array.from({ length: Math.floor((w - 14) / 7.285) }, (_, i) => (
            <rect key={`s${i}`} x={Math.round((i + 1) * 7.285)} y={0} width={2} height="100%" fill="#000" />
          ))}
        </>
      )}
      {region.burst && w > 20 && (
        <>
          <rect x={1} y={52} width={w - 4} height={4} fill={light} />
          {[3, 12, 19, 26, 60, 68].map((x) => (
            <rect key={x} x={x} y={56} width={2} height={3} fill={light} />
          ))}
          {[[8, 2], [15, 2], [22, 2], [30, 4], [37, 1], [40, 1], [43, 15]].map(([x, bw]) => (
            <rect key={`b${x}`} x={x} y={0} width={bw} height="100%" fill="#000" />
          ))}
        </>
      )}
      {region.burst && w <= 20 && <rect width={w} height="100%" fill="#000" />}
      {region.hits?.map((x) => (
        <rect key={x} x={x} y={38} width={2} height={region.label ? 8 : 14} fill={track.dark} />
      ))}
      {region.blocks?.map(([x, y, bw, bh, t], i) => (
        <rect key={i} x={x} y={y} width={bw} height={bh} fill={tone(t)} />
      ))}
      {region.pattern &&
        Array.from({ length: repeats }, (_, i) => (
          <g key={i} transform={`translate(${loopX(i)} 0)`} fill={i === 0 ? light : dim}>
            {region.pattern!.map(([x, y, bw, bh], j) => (
              <rect key={j} x={x + 1} y={y} width={bw} height={bh} />
            ))}
          </g>
        ))}
      {region.wave && (
        <>
          <rect x={1} y={54} width={w - 4} height={2} fill={dim} />
          {w > 35 ? (
            <g shapeRendering="auto" fill="#ffffff" fillOpacity={0.25}>
              <path d="M2 38h8L4 64H2z" />
              <path d={`M${w - 2} 38h-7l5 26h2z`} />
            </g>
          ) : (
            w < 20 && (
              <g fill="#ffffff" fillOpacity={0.25}>
                <rect x={2} y={38} width={2} height={28} />
                <rect x={w - 4} y={38} width={2} height={28} />
              </g>
            )
          )}
        </>
      )}
      {region.loop &&
        Array.from({ length: repeats - 1 }, (_, i) => {
          const x = loopX(i + 1) + 1;
          const d = track.compact ? 'M-6 0h12v1Q1 2 1 5h-2Q-1 2-6 1z' : 'M-9 0h18v1Q2 2 1 9h-2Q-2 2-9 1z';
          return (
            <g key={`n${i}`} fill="#000" shapeRendering="auto">
              <path d={d} transform={`translate(${x} 0)`} />
              <svg x={x} y="100%" overflow="visible">
                <path d={d} transform="scale(1 -1)" />
              </svg>
            </g>
          );
        })}
    </svg>
  );
};

const Region: React.FC<{ region: RegionData; track: Track }> = ({ region, track }) => {
  const tiny = region.square || track.compact || region.slices;
  const radius = tiny ? 'rounded-[3px]' : 'rounded-lg';
  const fill = region.muted ? 'bg-[#4a4a49]' : track.color;
  const ink = region.muted ? 'text-[#e39c6c]' : 'text-white/95';
  const w = region.end - region.x;
  const labelAt = track.compact ? 'pt-0.5 leading-[26px]' : 'pt-2 leading-6';
  // stacked compact lanes share one outline
  const span = track.compact ? 'top-0 -bottom-1' : 'inset-y-0';

  return (
    <div
      className={`absolute overflow-hidden whitespace-nowrap ${span} ${radius} ${fill} ${ink}`}
      style={{ left: toLane(region.x), width: w }}
    >
      <RegionArt region={region} track={track} />
      {region.label && <div className={`relative pl-3 ${labelAt}`}>{region.label}</div>}
      {region.label && w > LABEL_TILE && (
        <div className="absolute top-2 leading-6" style={{ left: LABEL_TILE + 12 }}>
          {region.label}
        </div>
      )}
      <div className={`absolute inset-0 border-2 border-black ${radius}`} />
    </div>
  );
};

const Lane: React.FC<{ track: Track }> = ({ track }) => (
  <div className={`relative border-b-2 border-black/20 ${track.height}`}>
    {track.banner && (
      <div className={`flex h-full items-center pt-0.5 font-bold leading-[26px] ${track.banner}`}>
        <span className="absolute" style={{ left: toLane(BAR_ONE) }}>
          {track.name}
        </span>
        <span className="absolute" style={{ left: toLane(BAR_ONE + LABEL_TILE) }}>
          {track.name}
        </span>
      </div>
    )}
    {track.regions.map((region, i) => (
      <Region key={i} region={region} track={track} />
    ))}
    {track.num === '23' && (
      <span className="absolute top-3 size-[18px] rounded-full bg-[#e0fb76]" style={{ left: toLane(1806) }} />
    )}
  </div>
);

const Arrange: React.FC = () => (
  <div className="relative min-h-0 flex-1 overflow-hidden bg-[#2d2d2d] text-[22px] font-medium">
    {/* lane tints sit under the grid */}
    <div className="absolute inset-0">
      {tracks.map((t) => (
        <div key={t.num} className={`${t.height} ${t.tint ?? ''}`} />
      ))}
    </div>
    <div className="absolute inset-0">
      {Array.from({ length: 84 }, (_, i) => 1 + i * 2).map((bar) => (
        <div key={bar} className="absolute inset-y-0 w-0.5 bg-white/10" style={{ left: toLane(barX(bar)) }} />
      ))}
    </div>
    <div className="absolute inset-y-0 right-0 bg-black/25 shadow-[inset_4px_0_4px_rgba(0,0,0,0.4)]" style={{ left: toLane(SONG_END) }} />
    <div className="relative">
      {tracks.map((t) => (
        <Lane key={t.num} track={t} />
      ))}
    </div>
    <div className="absolute inset-y-0 left-0 w-2 border-l-4 border-r-2 border-black bg-white" />
  </div>
);

const App: React.FC = () => (
  <div className="flex h-screen flex-col overflow-hidden bg-[#363636] font-['Inter','Liberation_Sans',sans-serif]">
    <Toolbar />
    <div className="flex min-h-0 flex-1">
      <aside className="flex w-[406px] shrink-0 flex-col">
        <HeaderButtons />
        <TrackHeaders />
      </aside>
      <main className="flex min-w-0 flex-1 flex-col">
        <Ruler />
        <Arrange />
      </main>
      <div className="flex w-[30px] shrink-0 flex-col border-l-2 border-[#2c2c2c] bg-[#383838] pb-[274px] pt-[79px]">
        <div className="mx-auto w-4 flex-1 rounded-full bg-[#6e6e6e]" />
      </div>
    </div>
    <div className="h-2.5 shrink-0 bg-[#353535]" />
  </div>
);

export default App;
